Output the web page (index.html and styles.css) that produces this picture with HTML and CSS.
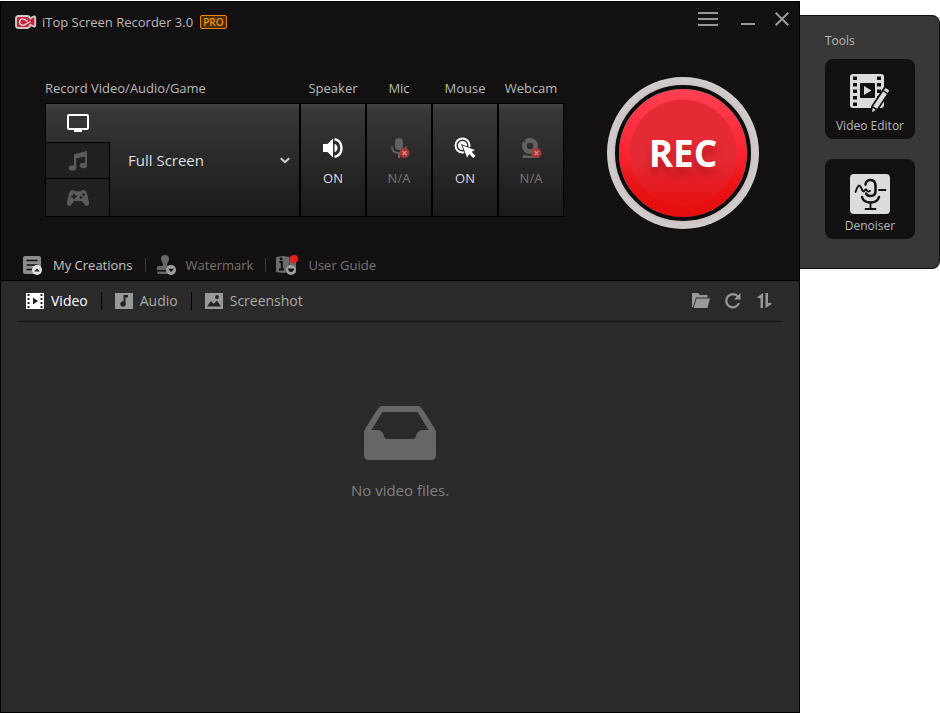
FILE: index.html
```html
<!DOCTYPE html>
<html lang="en">
<head>
<meta charset="utf-8">
<title>iTop Screen Recorder 3.0</title>
<link rel="stylesheet" href="styles.css">
</head>
<body>
<main class="window">
  <header class="titlebar">
    <svg class="logo" width="22" height="14" viewBox="0 0 22 14">
      <path d="M3.500 1H12q2.500 0 3.200 2.500L18 1.800q2.200-1 2.200.7v8q0 1.700-2.200.7L15.200 9.800Q14.700 13 12 13H3.500Q1 13 1 10.500v-7Q1 1 3.500 1z" fill="#c8213b" stroke="#cfc6c6" stroke-width="1.900" stroke-linejoin="round"/>
      <path d="M15.500 6.500 9.500 9.800Q7 11 5.300 9.300 3.700 7 5.300 4.800 7 3.200 9.500 4.400l3 2" fill="none" stroke="#ded4d4" stroke-width="1.400"/>
    </svg>
    <h1 class="title">iTop Screen Recorder 3.0</h1>
    <span class="badge">PRO</span>
    <div class="controls">
      <button class="control" aria-label="Menu"><svg width="20" height="14" viewBox="0 0 20 14"><path d="M0 1h20M0 7h20M0 13h20" stroke="#999" stroke-width="2"/></svg></button>
      <button class="control" aria-label="Minimize"><svg width="14" height="14" viewBox="0 0 14 14"><path d="M0 12h14" stroke="#999" stroke-width="2"/></svg></button>
      <button class="control" aria-label="Close"><svg width="14" height="14" viewBox="0 0 14 14"><path d="m.7.7 12.600 12.600M13.300.7.7 13.300" stroke="#999" stroke-width="2"/></svg></button>
    </div>
  </header>

  <section class="deck">
    <div class="sources">
      <div class="source source-area">
        <label class="source-label" for="area">Record Video/Audio/Game</label>
        <div class="panel area">
          <div class="modes">
            <button class="mode mode-active" aria-label="Video"><svg width="22" height="18" viewBox="0 0 22 18"><rect x="1" y="1" width="20" height="14" rx="1" fill="none" stroke="#fff" stroke-width="2"/><path d="M7 15h8v3H7z" fill="#fff"/></svg></button>
            <button class="mode" aria-label="Audio"><svg width="20" height="20" viewBox="0 0 20 20" fill="#5b5b5b"><path d="M6 3.200 19 0v5L8.200 7.500V17H6z"/><path d="M17 3h2v12h-2z"/><ellipse cx="4.600" cy="17" rx="3.700" ry="2.700"/><ellipse cx="15.400" cy="14.500" rx="3.700" ry="2.700"/></svg></button>
            <button class="mode" aria-label="Game"><svg width="22" height="18" viewBox="0 0 22 18"><path d="M5.500 1q1.800 0 2.500 1.200h6Q14.700 1 16.500 1q2.500 0 3.600 4T22 13.500q0 3.500-2 3.500-1.600 0-3-2.200L15 12H7l-2 2.800Q3.600 17 2 17q-2 0-2-3.500Q.8 9 1.900 5T5.500 1z" fill="#5b5b5b"/><path d="M4.300 7.500h5.400M7 4.800v5.400" stroke="#202020" stroke-width="1.800"/><g fill="#202020"><circle cx="16.500" cy="5.500" r="1.200"/><circle cx="14" cy="8.500" r="1.200"/></g></svg></button>
          </div>
          <div class="picker">
            <select id="area" class="picker-select"><option>Full Screen</option></select>
            <svg class="picker-arrow" width="10" height="7" viewBox="0 0 10 7"><path d="m.8 1.200 4.200 4 4.200-4" fill="none" stroke="#d0d0d0" stroke-width="2"/></svg>
          </div>
        </div>
      </div>
      <div class="source">
        <span class="source-label" id="speaker">Speaker</span>
        <button class="panel device" aria-labelledby="speaker"><svg width="22" height="22" viewBox="0 0 22 22" fill="#fff"><path d="M1 7h4.500L11 1.500v19L5.500 15H1z"/><path d="M12.500 6.800q3 1.200 3 4.200t-3 4.200z"/><path d="M12.500 2.200Q19.500 3.800 19.500 11t-7 8.800" fill="none" stroke="#fff" stroke-width="2.400"/></svg>ON</button>
      </div>
      <div class="source">
        <span class="source-label" id="mic">Mic</span>
        <button class="panel device device-off" aria-labelledby="mic"><svg width="22" height="22" viewBox="0 0 22 22"><rect x="7" y="1" width="8" height="12" rx="4" fill="#626161"/><path d="M4 9.500q0 6.500 7 6.500t7-6.500M11 16v5" fill="none" stroke="#626161" stroke-width="2"/><circle cx="16.500" cy="16" r="5" fill="#a63637"/><path d="m14.500 14 4 4m0-4-4 4" stroke="#d08c8c" stroke-width="1.200"/></svg>N/A</button>
      </div>
      <div class="source">
        <span class="source-label" id="mouse">Mouse</span>
        <button class="panel device" aria-labelledby="mouse"><svg width="22" height="22" viewBox="0 0 22 22"><g fill="none" stroke="#fff"><circle cx="8.500" cy="8.500" r="7" stroke-width="2"/><circle cx="8.500" cy="8.500" r="3.600" stroke-width="2"/></g><circle cx="8.500" cy="8.500" r="2.800" fill="#fff"/><path d="M8.500 8.500 21 13l-3.300 1.800 3.800 3.900-2.300 2.300-3.900-3.900-2.200 3.500z" fill="#fff" stroke="#2b2b2b" stroke-width="1.800" paint-order="stroke"/></svg>ON</button>
      </div>
      <div class="source">
        <span class="source-label" id="webcam">Webcam</span>
        <button class="panel device device-off" aria-labelledby="webcam"><svg width="22" height="22" viewBox="0 0 22 22"><circle cx="10" cy="9" r="5.700" fill="none" stroke="#626161" stroke-width="4.700"/><circle cx="4.800" cy="4.500" r="1" fill="#333"/><path d="M3 17.500q7 2.600 13 0l3 3.500H2.500z" fill="#626161"/><circle cx="16.500" cy="16" r="5" fill="#a63637"/><path d="m14.500 14 4 4m0-4-4 4" stroke="#d08c8c" stroke-width="1.200"/></svg>N/A</button>
      </div>
    </div>
    <button class="rec"><span class="rec-cap">REC</span></button>
  </section>

  <nav class="nav">
    <a class="nav-link nav-active" href="#"><svg width="20" height="20" viewBox="0 0 20 20"><rect width="18" height="18" y="1" rx="2" fill="#8d8d8d"/><path d="M3.500 5.500h11M3.500 10h11M3.500 14.500h6" stroke="#121011" stroke-width="1.600"/><circle cx="14" cy="15" r="5" fill="#e2e2e2"/><path d="m11.200 16.500 2.800-3 2.800 3z" fill="#222"/></svg>My Creations</a>
    <a class="nav-link" href="#"><svg width="20" height="20" viewBox="0 0 20 20"><path d="M9 0q4 0 4 4 0 2-1.500 4-1 1.500 0 3h4q2 0 2 2.500V15H.8v-1.500Q.8 11 2.800 11h3.700q1-1.500 0-3Q5 6 5 4q0-4 4-4z" fill="#676767"/><path d="M1 16.500h10V19H2z" fill="#676767"/><circle cx="15" cy="15" r="5" fill="#a0a0a0"/><path d="m12 13.700 3 3.200 3-3.200z" fill="#121011"/></svg>Watermark</a>
    <a class="nav-link" href="#"><svg width="22" height="20" viewBox="0 0 22 20"><path d="m0 2 7-1 6.500 1L20 1v17l-6.500-1L7 18l-7-1z" fill="#6b6b6b"/><path d="M13.500 2v15" stroke="#444"/><path d="M3.500 7h2.300v7M3 14.500h5" stroke="#121011" stroke-width="2" fill="none"/><circle cx="5.200" cy="3.900" r="1.400" fill="#121011"/><circle cx="15" cy="15" r="5" fill="#a0a0a0"/><path d="M12 13.500h6q-.5 3.500-3 3.500t-3-3.500z" fill="#121011"/><circle cx="18" cy="4" r="4" fill="#ea1c1c"/></svg>User Guide</a>
  </nav>

  <section class="library">
    <div class="library-bar">
      <div class="tabs">
        <button class="tab tab-active"><svg width="18" height="16" viewBox="0 0 18 16"><path d="M0 0h18v16H0z" fill="#fff"/><path d="M2.500 1v14M15.500 1v14" stroke="#222" stroke-width="2" stroke-dasharray="2 2"/><path d="m7 4.500 5 3.500-5 3.500z" fill="#222"/></svg>Video</button>
        <button class="tab"><svg width="18" height="16" viewBox="0 0 18 16"><path d="M0 0h18v16H0z" fill="#999"/><path d="M8.500 2H13v2.500h-2.500V11H8.500z" fill="#222"/><circle cx="8" cy="11" r="2.700" fill="#222"/></svg>Audio</button>
        <button class="tab"><svg width="18" height="16" viewBox="0 0 18 16"><path d="M0 0h18v16H0z" fill="#999"/><path d="M2 13.500 6 8l2.500 3L12 7.500l4 6z" fill="#222"/><circle cx="12" cy="4" r="1.900" fill="#222"/></svg>Screenshot</button>
      </div>
      <div class="tools">
        <button class="tool" aria-label="Open folder"><svg width="18" height="16" viewBox="0 0 18 16" fill="#999"><path d="M0 0h6l2 2h7.500v2.500H4L1 14H0z"/><path d="M4.500 5.500H18L15.500 15H1.700z"/></svg></button>
        <button class="tool" aria-label="Refresh"><svg width="18" height="16" viewBox="0 0 18 16"><path d="M14 3.600A6.600 6.600 0 1 0 15 10.200" fill="none" stroke="#999" stroke-width="2.200"/><path d="M16.500 0v6.500H10z" fill="#999"/></svg></button>
        <button class="tool" aria-label="Sort"><svg width="16" height="16" viewBox="0 0 16 16" fill="#999"><path d="M7 0v15H4.500V5H1.500V4z"/><path d="M9.500 0H12v10h3.500v1.200L9.500 15z"/></svg></button>
      </div>
    </div>
    <div class="empty">
      <svg width="72" height="54" viewBox="0 0 72 54"><path d="M18 0h36q2.500 0 4 2.500L71 23q1 1.500 1 3.500V49q0 5-5 5H5q-5 0-5-5V26.500Q0 24.500 1 23L14 2.500Q15.500 0 18 0zM18.500 6 7.500 24H13q5 0 6.500 4.500 1 4.500 4 4.500h25q3 0 4-4.500Q54 24 59 24h5.500L53.500 6z" fill="#666"/></svg>
      <p class="empty-text">No video files.</p>
    </div>
  </section>
</main>

<aside class="side">
  <h2 class="side-title">Tools</h2>
  <button class="card"><svg width="40" height="40" viewBox="0 0 40 40"><rect width="34" height="34" rx="3" fill="#dcdcdc"/><path d="M5 2.500v30M29 2.500v30" stroke="#121011" stroke-width="4" stroke-dasharray="3.500 3"/><rect x="10" y="9" width="15" height="15" rx="1" fill="#121011"/><path d="m14 12 7.500 4.500L14 21z" fill="#dcdcdc"/><path d="m22 32.500 12-18q1-2 3-.7l1.500 1q2 1.300.8 3.200l-12 18L21 40z" fill="#dcdcdc" stroke="#121011" stroke-width="1.700"/><path d="m33 16.500 5 3.500M22 32.500l5.300 3.500" stroke="#121011" stroke-width="1.500"/></svg>Video Editor</button>
  <button class="card"><svg width="40" height="40" viewBox="0 0 40 40"><rect width="40" height="40" rx="4" fill="#dcdcdc"/><g fill="none" stroke="#121011" stroke-linecap="round"><path d="M5.500 18q3-9 5-5.500l2 4q1 2 2.200 0t2.300 0 3 .3M29 16h6.500" stroke-width="1.800"/><path d="M15.500 10.500Q16 6 20.500 6t5 5v6q0 5-5 5-3.500 0-4.500-2.500" stroke-width="2.500"/><path d="M12 23q1.500 5.500 8.500 5.500T29 23" stroke-width="2.500"/><path d="M20.500 29v5.500M15.500 35h10" stroke-width="1.800"/></g></svg>Denoiser</button>
</aside>
</body>
</html>
```
FILE: styles.css
```css
* { box-sizing: border-box; }

body {
  margin: 0;
  min-height: 100vh;
  display: flex;
  align-items: flex-start;
  background: #fff;
  color: #b9b9b9;
  font: 13px/20px "Open Sans", "Noto Sans", sans-serif;
}

button {
  margin: 0;
  padding: 0;
  border: 0;
  background: none;
  color: inherit;
  font: inherit;
  cursor: pointer;
}

svg { display: block; flex: none; }

h1, h2, p { margin: 0; font-weight: 400; }

.window {
  flex: 1;
  display: flex;
  flex-direction: column;
  min-height: calc(100vh - 2px);
  margin-top: 1px;
  border: 1px solid #000;
  background: #121011;
}

/* Title bar */
.titlebar {
  display: flex;
  align-items: center;
  height: 40px;
  padding: 0 10px 0 14px;
}

.title { margin: 0 7px 0 5px; font-size: 13px; }

.badge {
  padding: 0 2px;
  border: 1px solid #f0820f;
  border-radius: 2px;
  background: #4a2c0c;
  color: #ee9411;
  font-size: 10px;
  line-height: 12px;
  font-weight: 600;
}

.controls {
  display: flex;
  align-self: flex-start;
  gap: 20px;
  margin: 10px 0 0 auto;
}

.control:first-child { margin-right: 3px; }

/* Recording deck */
.deck {
  display: flex;
  gap: 43px;
  padding: 35px 40px 21px 44px;
}

.sources { display: flex; padding-top: 1px; }

.source {
  display: flex;
  flex-direction: column;
  gap: 5px;
  width: 66px;
  text-align: center;
  white-space: nowrap;
}

.source-area { width: 255px; text-align: left; }

.panel {
  height: 114px;
  border: 1px solid #000;
  background: linear-gradient(#454344, #363636 8px, #1a1a1a);
}

.area { display: flex; }

.modes {
  display: grid;
  grid-template-rows: 38px 36px 38px;
  width: 64px;
}

.mode {
  display: grid;
  place-items: center;
  border: solid #000;
  border-width: 1px 1px 0 0;
  background: #202020;
}

.mode-active { border: 0; background: none; }

.picker {
  flex: 1;
  display: grid;
  align-items: center;
}

.picker-select, .picker-arrow { grid-area: 1 / 1; }

.picker-select {
  width: 100%;
  height: 100%;
  padding: 0 0 0 18px;
  border: 0;
  appearance: none;
  background: none;
  color: #dedede;
  font: inherit;
  font-size: 15px;
}

.picker-arrow { justify-self: end; margin-right: 9px; pointer-events: none; }

.device {
  display: flex;
  flex-direction: column;
  align-items: center;
  justify-content: center;
  gap: 9px;
  padding-top: 4px;
  color: #dedede;
}

.device-off { color: #777; }

.rec {
  width: 152px;
  height: 152px;
  padding: 8px;
  border-radius: 50%;
  background: radial-gradient(closest-side, #c9b9b9 88%, #d0c8c8 93%, #cfcdcc 100%);
}

.rec-cap {
  display: grid;
  place-items: center;
  height: 100%;
  border: 4px solid #0d0b0c;
  border-radius: 50%;
  background:
    linear-gradient(#e60e0e00 55%, #e60e0e 95%) padding-box,
    radial-gradient(circle closest-side, #e42a34 0 82%, #e42a3400 85%) no-repeat padding-box,
    linear-gradient(#ff4054, #fa2432 50%, #e60e0e) padding-box;
  color: #fff;
  font-size: 37px;
  font-weight: 700;
  text-shadow: 0 8px 6px #a0101880;
}

/* Main navigation */
.nav {
  display: flex;
  align-items: center;
  height: 30px;
  padding-left: 22px;
}

.nav-link {
  display: flex;
  align-items: center;
  gap: 10px;
  color: #747474;
  text-decoration: none;
}

.nav-active { color: #c4c4c4; }

.nav-link + .nav-link::before {
  content: "";
  width: 1px;
  height: 14px;
  margin-left: 12px;
  background: #3a3a3a;
}

/* Library */
.library {
  flex: 1;
  border-top: 1px solid #000;
  background: #2a2a2a;
}

.library-bar {
  display: flex;
  align-items: center;
  justify-content: space-between;
  height: 41px;
  margin: 0 16px;
  padding: 0 11px 0 9px;
  border-bottom: 1px solid #111;
}

.tabs, .tools { display: flex; align-items: center; }

.tools { gap: 14px; }

.tab {
  display: flex;
  align-items: center;
  gap: 7px;
  color: #a9a9a9;
  font-size: 14px;
}

.tab-active { color: #fff; }

.tab + .tab::before {
  content: "";
  width: 1px;
  height: 18px;
  margin: 0 6px 0 13px;
  background: #000;
}

.empty {
  display: flex;
  flex-direction: column;
  align-items: center;
  gap: 20px;
  padding-top: 84px;
}

.empty-text { color: #808080; font-size: 15px; }

/* Tools flyout */
.side {
  display: flex;
  flex-direction: column;
  width: 140px;
  margin-top: 15px;
  padding: 15px 24px 29px 25px;
  border: 1px solid #111;
  border-left: 0;
  border-radius: 0 8px 8px 0;
  background: #383838;
  font-size: 12px;
}

.side-title { margin-bottom: 8px; font-size: 12px; }

.card {
  display: flex;
  flex-direction: column;
  align-items: center;
  gap: 2px;
  height: 80px;
  padding-top: 15px;
  border-radius: 8px;
  background: #121011;
  white-space: nowrap;
}

.card + .card { margin-top: 20px; }
```
